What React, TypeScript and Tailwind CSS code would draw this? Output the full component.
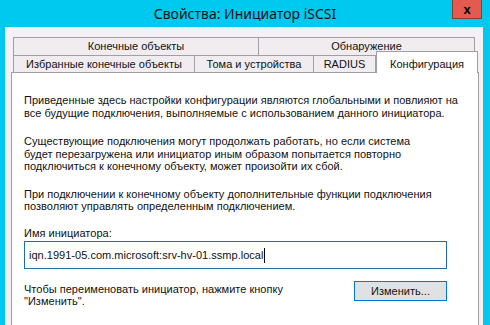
const font = { fontFamily: '"Liberation Sans", Arial, sans-serif' };

export default function App() {
  return (
    <div className="w-[490px] h-[325px] overflow-hidden bg-[#00c9ef] flex flex-col" style={font}>
      {/* title bar */}
      <div className="relative h-[27px] shrink-0 flex items-center justify-center">
        <span className="text-[14px] text-[#111]" style={{ fontFamily: '"Noto Sans", "Liberation Sans", sans-serif' }}>
          Свойства: Инициатор iSCSI
        </span>
        <div className="absolute right-[8px] top-0 w-[30px] h-[19px] bg-[#e25a50] border border-[#8e3a33] border-t-0 flex items-center justify-center">
          <span className="text-[13px] font-bold text-black leading-none">x</span>
        </div>
      </div>

      {/* window body */}
      <div className="ml-[5px] w-[478px] flex-1 bg-[#f5f0f5] pl-[6px] pt-[10px] text-[11px] tracking-[0.02px] text-[#111] whitespace-nowrap">
        {/* tab rows */}
        <div className="flex h-[18px] ml-[2px] w-[462px]">
          <div className="w-[246px] border border-[#a0a0a0] border-b-0 bg-[#f0ecf0] flex items-center justify-center">
            Конечные объекты
          </div>
          <div className="flex-1 border border-l-0 border-[#a0a0a0] border-b-0 bg-[#f0ecf0] flex items-center justify-center">
            Обнаружение
          </div>
        </div>
        <div className="relative flex items-end h-[17px] ml-[2px]">
          <div className="w-[182px] h-[17px] border border-[#a0a0a0] border-b-0 bg-[#f0ecf0] flex items-center justify-center">
            Избранные конечные объекты
          </div>
          <div className="w-[119px] h-[17px] border border-l-0 border-[#a0a0a0] border-b-0 bg-[#f0ecf0] flex items-center justify-center">
            Тома и устройства
          </div>
          <div className="w-[62px] h-[17px] border border-l-0 border-[#a0a0a0] border-b-0 bg-[#f0ecf0] flex items-center justify-center">
            RADIUS
          </div>
          <div className="relative z-10 w-[102px] h-[22px] -mb-px border border-[#a0a0a0] border-b-0 bg-white flex items-start justify-center pt-[4px]">
            Конфигурация
          </div>
        </div>

        {/* panel */}
        <div className="w-[468px] h-[260px] bg-white border border-[#a0a0a0] pl-[12px] pt-[21px] leading-[12.5px]">
          <p>
            Приведенные здесь настройки конфигурации являются глобальными и повлияют на
            <br />
            все будущие подключения, выполняемые с использованием данного инициатора.
          </p>
          <p className="mt-[16px]">
            Существующие подключения могут продолжать работать, но если система
            <br />
            будет перезагружена или инициатор иным образом попытается повторно
            <br />
            подключиться к конечному объекту, может произойти их сбой.
          </p>
          <p className="mt-[15px]">
            При подключении к конечному объекту дополнительные функции подключения
            <br />
            позволяют управлять определенным подключением.
          </p>
          <p className="mt-[14px]">Имя инициатора:</p>
          <div className="mt-[2px] w-[423px] h-[28px] border border-[#1f6ea5] flex items-center pl-[4px]">
            <span>iqn.1991-05.com.microsoft:srv-hv-01.ssmp.local</span>
            <span className="w-px h-[15px] bg-black ml-px" />
          </div>
          <div className="flex items-start mt-[12px] w-[423px]">
            <p className="flex-1 pt-[2px] leading-[12px]">
              Чтобы переименовать инициатор, нажмите кнопку
              <br />
              "Изменить".
            </p>
            <button className="w-[93px] h-[20px] bg-[#e1e1e1] border border-[#0078d7] flex items-center justify-center">
              Изменить...
            </button>
          </div>
        </div>
      </div>
    </div>
  );
}
